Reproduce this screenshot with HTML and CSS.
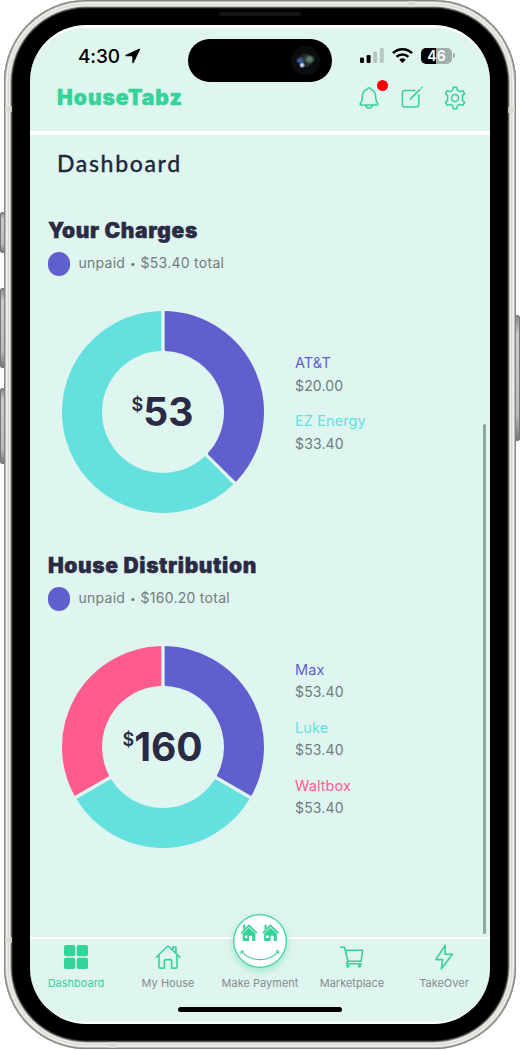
FILE: index.html
```html
<!DOCTYPE html>
<html lang="en">
<head>
<meta charset="utf-8">
<title>HouseTabz</title>
<link rel="stylesheet" href="styles.css">
</head>
<body>
<div class="device">
  <i class="key key-action"></i><i class="key key-up"></i><i class="key key-down"></i><i class="key key-power"></i>
  <div class="shell">
    <i class="speaker"></i>
    <i class="band band-t"></i><i class="band band-b"></i><i class="band band-l1"></i><i class="band band-l2"></i><i class="band band-r1"></i>
    <main class="screen">
      <div class="island"><span class="lens"></span></div>
      <div class="status">
        <div class="clock"><span class="time">4:30</span>
          <svg width="16" height="16" viewBox="0 0 16 16"><path d="M14.200.8 1 6.800c-1 .5-.8 1.500.3 1.500h5.500c.4 0 .5.1.5.500v5.500c0 1.100 1.100 1.200 1.500.3L15 1.700c.3-.7-.100-1.200-.8-.9z"/></svg>
        </div>
        <div class="signals">
          <svg width="24" height="15" viewBox="0 0 24 15"><rect x="0" y="9.500" width="4" height="5.500" rx="1.200"/><rect x="6.600" y="7" width="4" height="8" rx="1.200"/><g fill="#b4c7c1"><rect x="13.200" y="3.600" width="4" height="11.400" rx="1.200"/><rect x="19.800" y="0" width="4" height="15" rx="1.200"/></g></svg>
          <svg class="wifi" width="21" height="15" viewBox="0 0 21 15"><g fill="none" stroke="#000" stroke-width="2.500"><path d="M1 5.200a13.600 13.600 0 0 1 19 0"/><path d="M4.600 8.900a8.400 8.400 0 0 1 11.800 0"/></g><path d="m10.500 15-3.200-3.300a4.700 4.700 0 0 1 6.400 0z"/></svg>
          <div class="battery"><span>46</span></div><i class="cap"></i>
        </div>
      </div>
      <header class="header">
        <span class="brand">HouseTabz</span>
        <div class="actions">
          <div class="bell">
            <svg width="20" height="24" viewBox="0 0 20 24"><path d="M10 1.800c.8 0 1.400.5 1.600 1.400 3 .8 4.700 3 4.900 6.200.2 4 .7 6.500 2.200 8.100.5.7.2 1.400-.6 1.400H1.900c-.8 0-1.100-.7-.6-1.400 1.500-1.600 2-4.100 2.200-8.100.2-3.200 1.900-5.400 4.900-6.200.2-.9.8-1.400 1.600-1.400zM6.700 19.200c.2 1.900 1.500 2.900 3.300 2.900s3.100-1 3.300-2.900"/></svg>
            <i class="alert"></i>
          </div>
          <svg width="22" height="24" viewBox="0 0 22 24"><path d="M13.800 4.500H4c-1.800 0-2.600.9-2.600 2.600v11.300c0 1.700.8 2.500 2.600 2.500h11.300c1.700 0 2.500-.8 2.500-2.500V8.800M9.300 13.100 19 3.400M20.500 1.700l.4-.4"/></svg>
          <svg width="24" height="24" viewBox="0 0 24 24"><path d="M10.300 1.200h3.400l.8 3.200c.9.300 1.500.7 2.200 1.200l3.200-.9 1.700 2.900-2.300 2.300c.2.700.3 1.300.3 2.100s-.1 1.400-.3 2.100l2.300 2.300-1.700 2.900-3.200-.9c-.7.600-1.300.9-2.200 1.200l-.8 3.200h-3.400l-.8-3.200c-.9-.3-1.500-.6-2.200-1.200l-3.200.9-1.700-2.900 2.300-2.300a8 8 0 0 1 0-4.200L2.400 7.600l1.700-2.900 3.200.9c.7-.5 1.300-.9 2.200-1.200z"/><circle cx="12" cy="12" r="3.500"/></svg>
        </div>
      </header>
      <div class="content">
        <h1>Dashboard</h1>
        <section class="card">
          <h2>Your Charges</h2>
          <p class="summary"><i class="dot"></i><span>unpaid <small>•</small> $53.40 total</span></p>
          <div class="row">
            <div class="donut">
              <svg width="204" height="204" viewBox="-102 -102 204 204">
                <path class="violet" d="M2.650-99.965A100 100 0 0 1 72.763 68.596L45.798 41.791A62 62 0 0 0 2.650-61.943Z"/>
                <path class="teal" d="M69.027 72.354A100 100 0 1 1-2.650-99.965V-61.943A62 62 0 1 0 42.062 45.549Z"/>
              </svg>
              <div class="amount"><sup>$</sup><b>53</b></div>
            </div>
            <dl class="legend">
              <div><dt class="c-violet">AT&amp;T</dt><dd>$20.00</dd></div>
              <div><dt class="c-teal">EZ Energy</dt><dd>$33.40</dd></div>
            </dl>
          </div>
        </section>
        <section class="card">
          <h2 class="distribution">House Distribution</h2>
          <p class="summary"><i class="dot"></i><span>unpaid <small>•</small> $160.20 total</span></p>
          <div class="row">
            <div class="donut">
              <svg width="204" height="204" viewBox="-102 -102 204 204">
                <path class="violet" d="M2.650-99.965A100 100 0 0 1 87.897 47.688L54.969 28.677A62 62 0 0 0 2.650-61.943Z"/>
                <path class="teal" d="M85.247 52.278A100 100 0 0 1-85.247 52.278L-52.319 33.267A62 62 0 0 0 52.319 33.267Z"/>
                <path class="pink" d="M-2.650-99.965A100 100 0 0 0-87.897 47.688L-54.969 28.677A62 62 0 0 1-2.650-61.943Z"/>
              </svg>
              <div class="amount"><sup>$</sup><b>160</b></div>
            </div>
            <dl class="legend">
              <div><dt class="c-violet">Max</dt><dd>$53.40</dd></div>
              <div><dt class="c-teal">Luke</dt><dd>$53.40</dd></div>
              <div><dt class="c-pink">Waltbox</dt><dd>$53.40</dd></div>
            </dl>
          </div>
        </section>
        <i class="scrollbar"></i>
      </div>
      <nav class="tabs">
        <a class="tab active"><svg width="26" height="26" viewBox="0 0 26 26"><g fill="#34d399" stroke="none"><rect x="1" y="1" width="11.300" height="11.300" rx="2"/><rect x="13.700" y="1" width="11.300" height="11.300" rx="2"/><rect x="1" y="13.700" width="11.300" height="11.300" rx="2"/><rect x="13.700" y="13.700" width="11.300" height="11.300" rx="2"/></g></svg><span>Dashboard</span></a>
        <a class="tab"><svg width="26" height="26" viewBox="0 0 26 26"><path d="M1.200 13.300 12 2.700c.7-.7 1.300-.7 2 0l10.800 10.600M4 11v11.700c0 .9.500 1.400 1.400 1.400h4V17c0-.9.500-1.400 1.400-1.400h4.400c.9 0 1.400.5 1.400 1.400v7.100h4c.9 0 1.400-.5 1.400-1.400V11M17.900 5.600V3h3v5.600"/></svg><span>My House</span></a>
        <a class="tab pay"><span class="badge"><svg width="54" height="54" viewBox="0 0 54 54">
          <g fill="#34d399"><path d="M7.800 18.600 16 10.200l8.500 8.400-1.100 1.100-7.400-7-7.100 7zM10 10.800h2.200v3L10 16zM9.700 19.400 16 13.800l6.400 5.600V27h-3.200v-5.200h-3.200V27H9.700z"/><path d="M29.300 18.600 37.500 10.200l8.500 8.400-1.100 1.100-7.400-7-7.100 7zM31.500 10.800h2.200v3l-2.200 2.200zM31.200 19.400l6.300-5.600 6.400 5.600V27h-3.200v-5.200h-3.200V27h-6.300z"/></g>
          <g fill="#fff"><rect x="11.700" y="21.500" width="2.500" height="2.500"/><rect x="33.200" y="21.500" width="2.500" height="2.500"/></g>
          <path d="M9 37.800C18.500 48.500 36 48 44.700 37.800M8.200 40.300l-.1-2.900 2.900-.6M42.700 36.600l3 .6-.3 2.900" fill="none" stroke="#34d399" stroke-width="1.100"/></svg></span><span>Make Payment</span></a>
        <a class="tab"><svg width="26" height="26" viewBox="0 0 26 26"><path d="M1.500 3.200h4l3.500 14h13M6.400 6.300h17.200l-1.500 10.900H9M8.800 17.200l-1.200 2.600h14.800"/><g fill="#34d399" stroke="none"><circle cx="8.900" cy="22" r="1.700"/><circle cx="20.600" cy="22" r="1.700"/></g></svg><span>Marketplace</span></a>
        <a class="tab"><svg width="26" height="26" viewBox="0 0 26 26"><path d="M14.300 1.200 4.700 15.600h7L10.300 25l11.100-14.700H14z"/></svg><span>TakeOver</span></a>
      </nav>
      <div class="home"><i></i></div>
    </main>
  </div>
</div>
</body>
</html>
```

FILE: styles.css
```css
* { box-sizing: border-box; }
body { margin: 0; background: #fff; font-family: Inter, "Liberation Sans", sans-serif; }
h1, h2, p, dl, dd { margin: 0; }
svg { display: block; flex: none; }

/* Device body */
.device { position: relative; width: 520px; height: 1050px; padding-left: 4px; overflow: hidden; }
.shell {
  position: relative; width: 512px; height: 1049px; padding: 25px 26px; border-radius: 82px; background: #000;
  box-shadow: inset 0 0 0 1px #858481, inset 0 0 0 2px #b9b8b4, inset 0 0 0 3.500px #f2f1ed, inset 0 0 0 5px #dddbd6,
    inset 0 0 0 6.500px #eeede9, inset 0 0 0 7.500px #8a8985, inset 0 0 0 8.500px #33322f;
}
.key { position: absolute; width: 5px; border: 1px solid #777; border-radius: 2px; background: linear-gradient(#888, #ccc 15%, #bbb 80%, #777); }
.key-action { left: 0; top: 212px; height: 41px; }
.key-up { left: 0; top: 288px; height: 80px; }
.key-down { left: 0; top: 388px; height: 76px; }
.key-power { left: 515px; top: 315px; height: 126px; }
.speaker { position: absolute; left: 215px; top: 12px; width: 82px; height: 4px; border-radius: 2px; background: #151515; }
.band { position: absolute; background: #d8d8d3; opacity: .8; width: 7px; height: 6px; }
.band-t { left: 404px; top: 1px; }
.band-b { left: 105px; bottom: 1px; }
.band-l1 { left: 1px; top: 106px; }
.band-l2 { left: 1px; top: 937px; }
.band-r1 { right: 1px; top: 107px; }

/* Screen */
.screen {
  position: relative; display: flex; flex-direction: column; width: 460px; height: 999px;
  border: solid #fff; border-width: 3px 0 2px; border-radius: 56px; background: #dff5ef;
}
.island { position: absolute; left: 158px; top: 11px; width: 144px; height: 43px; border-radius: 22px; background: #000; }
.lens {
  position: absolute; right: 12px; top: 7px; width: 29px; height: 29px; border-radius: 50%;
  background: radial-gradient(circle at 38% 66%, #c8d8f5 0 4%, transparent 12%), radial-gradient(ellipse at 32% 50%, #3560a0 0 6%, transparent 18%),
    radial-gradient(ellipse at 64% 46%, #5c7d6d 0 7%, transparent 22%), radial-gradient(circle, #26292b 0 28%, #0b0c0d 36%);
}
.status { display: flex; justify-content: space-between; height: 56px; padding: 15px 35px 0 48px; }
.clock { display: flex; gap: 5px; height: 26px; align-items: center; }
.time { font-size: 19px; font-weight: 500; letter-spacing: -.1px; }
.signals { display: flex; align-items: center; height: 25px; }
.wifi { margin-left: 8px; }
.battery {
  width: 31px; height: 16px; margin-left: 8px; border-radius: 5px; background: linear-gradient(90deg, #000 48%, #9eafa9 48%);
  color: #fff; font-size: 14px; font-weight: 600; line-height: 16px; text-align: center;
}
.cap { width: 2px; height: 5px; margin-left: 1px; border-radius: 0 2px 2px 0; background: #9eafa9; }
.header { display: flex; justify-content: space-between; height: 51px; padding: 0 23px 0 27px; border-bottom: 4px solid #fff; }
.brand { color: #34d399; font-size: 21px; font-weight: 900; line-height: 27px; letter-spacing: 1px; -webkit-text-stroke: .4px; }
.actions { display: flex; gap: 20px; padding-top: 2px; }
.actions svg, .tab > svg { fill: none; stroke: #34d399; stroke-width: 1.500; stroke-linecap: round; stroke-linejoin: round; }
.bell { position: relative; margin-right: 2px; }
.alert { position: absolute; left: 18px; top: -6px; width: 11px; height: 11px; border-radius: 50%; background: #f00; }

.content { position: relative; flex: 1; padding: 14px 18px 0; }
h1 { padding-left: 9px; color: #1e293b; font: 500 23px/28px Lato, sans-serif; letter-spacing: 1.650px; -webkit-text-stroke: .3px; }
.card { height: 335px; padding-top: 39px; }
h2 { color: #2a2a44; font-size: 21px; font-weight: 900; line-height: 30px; letter-spacing: .620px; white-space: nowrap; -webkit-text-stroke: .4px; }
.summary { display: flex; align-items: center; gap: 9px; height: 36px; color: #6f7c7d; font-size: 14px; letter-spacing: .270px; }
.summary span { line-height: 18px; margin-top: -2px; }
.summary small { font-size: 10px; vertical-align: 1px; padding: 0 .500px; }
.dot { width: 21.500px; height: 24px; border-radius: 11px; background: #5f5fce; }
.row { display: flex; align-items: center; gap: 30.500px; padding: 28px 0 0 12.500px; }
.donut { position: relative; width: 204px; height: 204px; }
.donut path { stroke-width: 2; stroke-linejoin: round; }
.violet { fill: #5f5fce; stroke: #5f5fce; }
.teal { fill: #64e0de; stroke: #64e0de; }
.pink { fill: #ff5c8d; stroke: #ff5c8d; }
.amount { position: absolute; inset: 0; display: flex; align-items: center; justify-content: center; color: #2a2a44; }
.amount sup { font-size: 18px; font-weight: 600; line-height: 20px; transform: translateY(-7px); }
.amount b { font-size: 39px; font-weight: 650; line-height: 44px; }
.legend { display: grid; gap: 13px; margin-top: -17px; font-size: 14.500px; line-height: 22.500px; letter-spacing: .1px; white-space: nowrap; }
.legend dd { color: #6f7c7d; font-size: 14px; letter-spacing: .150px; }
.card:last-of-type .legend { margin-top: -16px; }
.c-violet { color: #5f5fce; }
.c-teal { color: #64e0de; }
.c-pink { color: #ff5c8d; }
.scrollbar { position: absolute; right: 4px; top: 289px; width: 3px; height: 510px; border-radius: 2px; background: #8fa59f; }

/* Bottom navigation */
.tabs { display: grid; grid-template-columns: repeat(5, 1fr); height: 63px; border-top: 2px solid #fff; }
.tab { display: flex; flex-direction: column; align-items: center; padding-top: 5px; gap: 5px; color: #858c8b; font-size: 11px; line-height: 16px; white-space: nowrap; }
.tab > svg { stroke-width: 1.600; }
.active { color: #34d399; }
.pay { position: relative; padding-top: 36px; }
.badge { position: absolute; left: 50%; top: -25px; width: 54px; height: 54px; margin-left: -27px; border-radius: 50%; background: #fff; box-shadow: inset 0 0 0 1.300px #34d399, 0 3px 7px #34d39966; }
.home { display: flex; justify-content: center; height: 22px; padding-top: 7px; }
.home i { width: 164px; height: 5px; border-radius: 3px; background: #000; }
```
